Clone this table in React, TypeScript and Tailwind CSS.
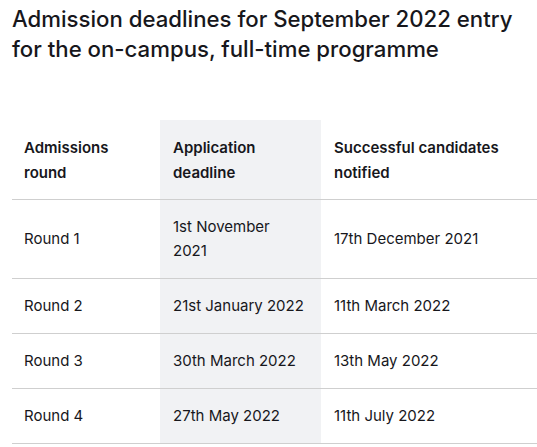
const rows = [
  { round: 'Round 1', deadline: '1st November 2021', notified: '17th December 2021' },
  { round: 'Round 2', deadline: '21st January 2022', notified: '11th March 2022' },
  { round: 'Round 3', deadline: '30th March 2022', notified: '13th May 2022' },
  { round: 'Round 4', deadline: '27th May 2022', notified: '11th July 2022' },
];

export default function App() {
  return (
    <div className="w-[537px] h-[447px] overflow-hidden bg-white pl-3 text-[#17171c] font-['Inter','Liberation_Sans',sans-serif]">
      <h2 className="pt-[4px] text-[22.2px] leading-[30px] font-medium">
        Admission deadlines for September 2022 entry for the on-campus, full-time programme
      </h2>

      <table className="mt-[56px] w-full table-fixed border-collapse text-[15px] leading-6">
        <thead>
          <tr className="border-b border-[#cfcfcf]">
            <th className="w-[148px] px-3 pt-[15px] pb-[14px] text-left align-middle font-semibold leading-[25px]">
              Admissions round
            </th>
            <th className="w-[161px] pl-[13px] pr-[16px] pt-[15px] pb-[14px] text-left align-middle font-semibold leading-[25px] bg-[#f1f2f4]">
              Application deadline
            </th>
            <th className="px-[13px] pt-[15px] pb-[14px] text-left align-middle font-semibold leading-[25px]">
              Successful candidates notified
            </th>
          </tr>
        </thead>
        <tbody>
          {rows.map((r) => (
            <tr key={r.round} className="border-b border-[#cfcfcf]">
              <td className="px-3 py-[15px] align-middle">{r.round}</td>
              <td className="pl-[13px] pr-[16px] py-[15px] align-middle bg-[#f1f2f4]">{r.deadline}</td>
              <td className="px-[13px] py-[15px] align-middle">{r.notified}</td>
            </tr>
          ))}
        </tbody>
      </table>
    </div>
  );
}
